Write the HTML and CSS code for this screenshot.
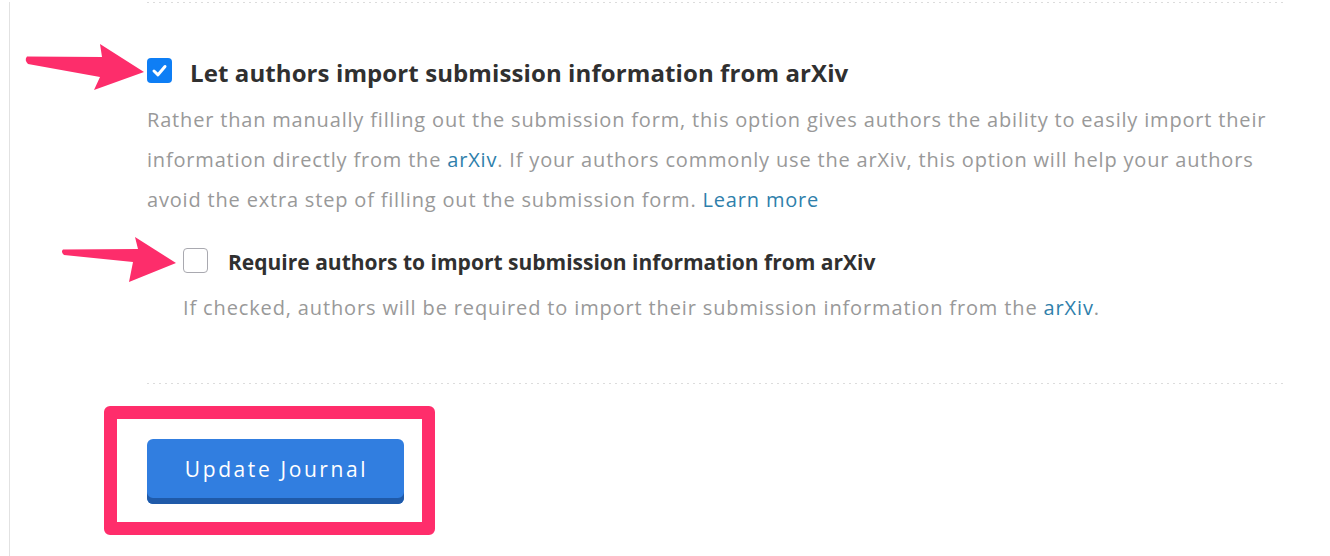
FILE: index.html
```html
<!DOCTYPE html>
<html>
<head>
<meta charset="utf-8">
<link rel="stylesheet" href="styles.css">
</head>
<body>
<div class="page">
  <div class="content">
    <div class="rule rule-top"></div>
    <section class="option">
      <label class="option-head">
        <span class="cb cb-checked"><svg viewBox="0 0 25 25" width="25" height="25"><path d="M7 13 L11 16.8 L18 8.5" fill="none" stroke="#fff" stroke-width="3" stroke-linecap="round" stroke-linejoin="round"/></svg></span>
        <span class="title">Let authors import submission information from arXiv</span>
      </label>
      <p class="desc">Rather than manually filling out the submission form, this option gives authors the ability to easily import their<br>information directly from the <a href="#">arXiv</a>. If your authors commonly use the arXiv, this option will help your authors<br>avoid the extra step of filling out the submission form. <a href="#">Learn more</a></p>
      <div class="sub-option">
        <label class="option-head sub-head">
          <span class="cb"></span>
          <span class="title title-sub">Require authors to import submission information from arXiv</span>
        </label>
        <p class="desc sub-desc">If checked, authors will be required to import their submission information from the <a href="#">arXiv</a>.</p>
      </div>
    </section>
    <div class="rule rule-bottom"></div>
    <div class="actions">
      <div class="btn-wrap">
        <button class="btn">Update Journal</button>
        <div class="highlight"></div>
      </div>
    </div>
  </div>
</div>
<svg class="annotations" width="1330" height="556" viewBox="0 0 1330 556">
  <path d="M27,56.5 L102,57 L100,44 L144,72 L94,90 L100,77 L28,64 Q24,60 27,56.5 Z" fill="#fd2d6b"/>
  <path d="M63,249.5 L138,249 L135,237 L176,263 L129,282 L133,262 L64,255 Q60.5,252 63,249.5 Z" fill="#fd2d6b"/>
</svg>
</body>
</html>
```
FILE: styles.css
```css
* { box-sizing: border-box; }
html, body { margin: 0; padding: 0; background: #fff; }
body {
  position: relative;
  width: 1330px;
  height: 556px;
  overflow: hidden;
  font-family: "Open Sans", Lato, sans-serif;
}
.page {
  margin-left: 9px;
  border-left: 1px solid #e2e2e2;
  height: 556px;
  padding-left: 137px;
}
.content { width: 1136px; }
.rule {
  height: 1px;
  background: repeating-linear-gradient(90deg, #dcdcdc 0 2px, transparent 2px 6px);
}
.rule-top { margin-top: 2px; }
.option-head {
  display: flex;
  align-items: center;
  height: 30px;
  margin-top: 52px;
}
.cb {
  width: 25px;
  height: 25px;
  border-radius: 4px;
  border: 1px solid #a9a9b0;
  background: #fff;
  flex: none;
  display: block;
}
.cb-checked {
  border: none;
  background: #0e7ef5;
}
.cb svg { display: block; }
.title {
  margin-left: 18px;
  padding-top: 5px;
  font-weight: 700;
  font-size: 24px;
  letter-spacing: 0.1px;
  color: #303030;
  line-height: 30px;
  white-space: nowrap;
}
.desc {
  margin: 15px 0 0;
  font-size: 20px;
  letter-spacing: 0.82px;
  line-height: 40px;
  color: #999;
  white-space: nowrap;
}
.desc a { color: #2f7fab; text-decoration: none; }
.sub-option { padding-left: 36px; }
.sub-head { margin-top: 25px; }
.title-sub {
  margin-left: 20px;
  padding-top: 3px;
  font-size: 21px;
  letter-spacing: 0;
}
.sub-desc { margin-top: 13px; letter-spacing: 0.86px; }
.rule-bottom { margin-top: 55px; }
.actions { padding-top: 55px; }
.btn-wrap { position: relative; width: 257px; }
.btn {
  display: block;
  width: 257px;
  height: 65px;
  border: none;
  border-radius: 6px;
  background: #317ee0;
  box-shadow: inset 0 -6px 0 #1f5aa9;
  color: #fff;
  font-family: "Open Sans", sans-serif;
  font-size: 21px;
  letter-spacing: 2.6px;
  padding: 0 0 6px 2px;
}
.highlight {
  position: absolute;
  top: -33px;
  left: -43px;
  right: -31px;
  bottom: -31px;
  border: 13.5px solid #ff2d6b;
  border-radius: 6px;
}
.annotations {
  position: absolute;
  left: 0;
  top: 0;
  pointer-events: none;
}
```
